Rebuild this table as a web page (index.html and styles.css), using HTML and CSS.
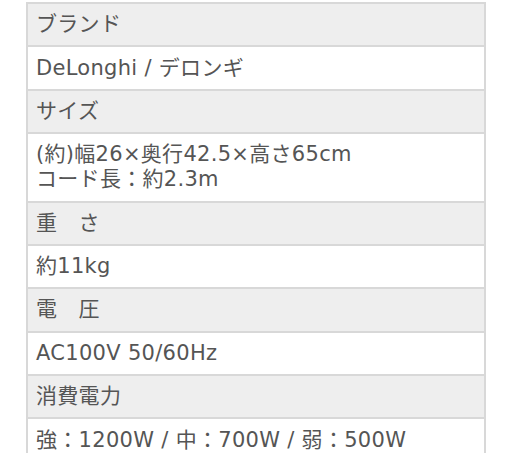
FILE: index.html
```html
<!DOCTYPE html>
<html lang="ja">
<head>
<meta charset="utf-8">
<title>仕様</title>
<link rel="stylesheet" href="styles.css">
</head>
<body>
<dl class="spec">
  <dt class="spec-head">ブランド</dt>
  <dd class="spec-value">DeLonghi / デロンギ</dd>
  <dt class="spec-head">サイズ</dt>
  <dd class="spec-value">(約)幅26×奥行42.5×高さ65cm<br>コード長：約2.3m</dd>
  <dt class="spec-head">重　さ</dt>
  <dd class="spec-value">約11kg</dd>
  <dt class="spec-head">電　圧</dt>
  <dd class="spec-value">AC100V 50/60Hz</dd>
  <dt class="spec-head">消費電力</dt>
  <dd class="spec-value">強：1200W / 中：700W / 弱：500W</dd>
</dl>
</body>
</html>
```
FILE: styles.css
```css
html, body {
  margin: 0;
  padding: 0;
  background: #ffffff;
}

.spec {
  margin: 2px 0 0 26px;
  width: 460px;
  box-sizing: border-box;
  border: 2px solid #d8d8d8;
  border-bottom: none;
  font-family: "DejaVu Sans", "Noto Sans CJK JP", sans-serif;
  font-size: 21px;
  line-height: 25px;
  letter-spacing: 0.3px;
  color: #555555;
}

.spec-head,
.spec-value {
  margin: 0;
  padding: 8.2px 8px;
  border-bottom: 2px solid #d8d8d8;
}

.spec-head {
  background: #eeeeee;
}

.spec-value {
  background: #ffffff;
}
```
